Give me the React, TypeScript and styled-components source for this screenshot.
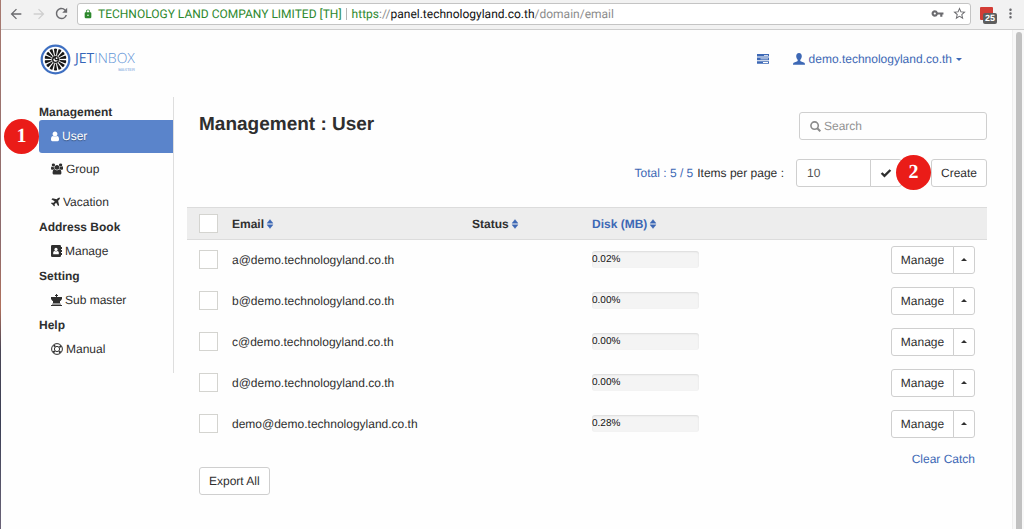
import React from "react";
import styled, { createGlobalStyle } from "styled-components";
import {
  MdArrowBack,
  MdArrowForward,
  MdRefresh,
  MdLock,
  MdVpnKey,
  MdStarBorder,
  MdMoreVert,
} from "react-icons/md";

const blue = "#3d68b5";
const ink = "#2f2f2f";
const line = "#cfcfcf";

const GlobalStyle = createGlobalStyle`
  *, *::before, *::after { box-sizing: border-box; }
  body {
    margin: 0;
    background: #fefefe;
    color: ${ink};
    font: 12px/16px "Liberation Sans", Arial, sans-serif;
    text-rendering: geometricPrecision;
  }
  button, input { font: inherit; color: inherit; text-rendering: inherit; }
  a { color: inherit; text-decoration: none; }
  svg { display: block; flex: none; }
`;

const Page = styled.div`
  display: flex;
  flex-direction: column;
  min-height: 100vh;
  border-left: 1px solid;
  border-image: linear-gradient(#a87a70, #8c6a6c 45%, #b0705c 58%, #4a4656 66%, #3b3f55 80%, #6b6478) 1;
`;

/* Browser chrome */

const BrowserBar = styled.div`
  display: flex;
  align-items: center;
  height: 30px;
  padding: 0 6px 2px 3px;
  background: #f2f2f2;
  border-bottom: 1px solid #cdcdcd;
`;

const BarButton = styled.button<{ $dim?: boolean }>`
  display: flex;
  align-items: center;
  justify-content: center;
  width: 23px;
  padding: 0;
  border: 0;
  background: none;
  color: ${(p) => (p.$dim ? "#cfcfcf" : "#6b6b6f")};
`;

const AddressBox = styled.div`
  display: flex;
  flex: 1;
  align-items: center;
  height: 22px;
  margin-left: 4px;
  padding: 0 3px 0 5px;
  background: #fff;
  border: 1px solid #c4c4c4;
  border-radius: 3px;
  font: 12px/16px Roboto, sans-serif;
  color: #8c8c8c;
`;

const Certificate = styled.span`
  margin-left: 5px;
  padding-right: 4px;
  border-right: 1px solid #b5b5b5;
  color: #2d882d;
  line-height: 12px;
`;

const Url = styled.span`
  flex: 1;
  margin-left: 5px;
`;

const Scheme = styled.span`
  color: #2d882d;
`;

const Host = styled.span`
  color: #111;
`;

const BoxIcons = styled.div`
  display: flex;
  align-items: center;
  gap: 8px;
  color: #6b6b6f;
`;

const Extension = styled.div`
  position: relative;
  width: 13px;
  height: 13px;
  margin: 0 10px 0 9px;
  border-radius: 1px;
  background: #d33c35;
`;

const ExtensionCount = styled.span`
  position: absolute;
  left: 3px;
  top: 6px;
  width: 14px;
  border-radius: 2px;
  background: #5d5d5d;
  color: #fff;
  font: bold 9px/11px "Liberation Sans", Arial, sans-serif;
  text-align: center;
`;

/* Page frame */

const Viewport = styled.div`
  display: flex;
  flex: 1;
`;

const Site = styled.div`
  flex: 1;
  padding: 0 25px 0 38px;
`;

const ScrollTrack = styled.div`
  display: flex;
  width: 12px;
  padding: 2px 2px 0 3px;
  background: #f8f8f8;
  border-left: 1px solid #eee;
`;

const ScrollThumb = styled.div`
  flex: 1;
  border-radius: 4px 4px 0 0;
  background: #c1c1c1;
`;

const Header = styled.header`
  display: flex;
  align-items: center;
  justify-content: space-between;
  height: 67px;
  padding: 0 25px 9px 1px;
  color: ${blue};
`;

const HeaderLinks = styled.nav`
  display: flex;
  align-items: center;
  gap: 24px;
`;

const Account = styled.a`
  display: flex;
  align-items: center;
  gap: 4px;
`;

const Columns = styled.div`
  display: flex;
  align-items: flex-start;
`;

/* Side menu */

const Sidebar = styled.nav`
  width: 135px;
  padding: 7px 0;
  border-right: 1px solid #dedede;
`;

const MenuHeading = styled.h2`
  margin: 0;
  font-size: 12px;
  line-height: 16px;
`;

const MenuItem = styled.a<{ $active?: boolean }>`
  position: relative;
  display: flex;
  align-items: center;
  gap: 3px;
  height: 33px;
  padding: 0 0 1px 12px;
  border-radius: 3px 0 0 3px;
  background: ${(p) => (p.$active ? "#5a84cb" : "none")};
  color: ${(p) => (p.$active ? "#fff" : ink)};
  text-shadow: ${(p) => (p.$active ? "0 1px 1px rgba(0, 0, 0, 0.35)" : "none")};
`;

const Marker = styled.span`
  position: absolute;
  right: 100%;
  top: 50%;
  width: 35px;
  height: 35px;
  margin-top: -18px;
  border-radius: 50%;
  background: #ea1c18;
  color: #fff;
  font: bold 20px/35px "Liberation Serif", serif;
  text-align: center;
  text-shadow: none;
`;

/* Content */

const Main = styled.main`
  flex: 1;
  padding: 15px 0 0 13px;
`;

const TitleRow = styled.div`
  display: flex;
  align-items: center;
  justify-content: space-between;
  padding-left: 12px;
`;

const Title = styled.h1`
  margin: 0;
  padding-bottom: 2px;
  font-size: 19px;
  line-height: 24px;
`;

const SearchBox = styled.label`
  display: flex;
  align-items: center;
  gap: 3px;
  width: 188px;
  height: 28px;
  padding: 0 10px;
  border: 1px solid ${line};
  border-radius: 3px;
  color: #8a8a8a;
`;

const SearchInput = styled.input`
  flex: 1;
  min-width: 0;
  padding: 0;
  border: 0;
  outline: 0;
  background: none;
  &::placeholder { color: #929292; opacity: 1; }
`;

const Toolbar = styled.div`
  display: flex;
  align-items: center;
  justify-content: flex-end;
  margin: 19px 0 20px;
`;

const Total = styled.span`
  margin-right: 4px;
  color: ${blue};
`;

const PageSizeLabel = styled.label`
  margin-right: 12px;
`;

const Group = styled.div`
  display: inline-flex;
`;

const PageSizeInput = styled.input`
  width: 75px;
  height: 28px;
  padding: 0 10px;
  border: 1px solid ${line};
  border-radius: 3px 0 0 3px;
  background: #fff;
  color: #555;
`;

const Button = styled.button<{ $join?: "left" | "right" }>`
  display: flex;
  align-items: center;
  justify-content: center;
  height: 28px;
  padding: 0 9px;
  border: 1px solid ${line};
  border-radius: ${(p) =>
    p.$join === "left" ? "3px 0 0 3px" : p.$join === "right" ? "0 3px 3px 0" : "3px"};
  margin-left: ${(p) => (p.$join === "right" ? "-1px" : "0")};
  background: #fff;
`;

const MarkedAction = styled.div`
  position: relative;
  margin-left: 29px;
`;

const UserTable = styled.table`
  width: 100%;
  table-layout: fixed;
  border-collapse: separate;
  border-spacing: 0;
  th, td { padding: 0; text-align: left; }
  td { height: 41px; padding-bottom: 2px; }
  th {
    height: 33px;
    background: #ededed;
    border: solid #dcdcdc;
    border-width: 1px 0;
  }
`;

const CheckCol = styled.col`
  width: 45px;
`;
const EmailCol = styled.col`
  width: 240px;
`;
const StatusCol = styled.col`
  width: 120px;
`;

const CheckBox = styled.input`
  display: block;
  appearance: none;
  width: 19px;
  height: 19px;
  margin: 0 0 0 12px;
  border: 1px solid #d4d4d0;
  background: #fff;
`;

const SortLink = styled.a<{ $active?: boolean }>`
  display: inline-flex;
  align-items: center;
  gap: 2px;
  color: ${(p) => (p.$active ? blue : ink)};
`;

const DiskBar = styled.div`
  width: 107px;
  height: 17px;
  border-radius: 3px;
  background: #f4f4f4;
  box-shadow: inset 0 1px 2px rgba(0, 0, 0, 0.1);
  color: #111;
  font-size: 10px;
  line-height: 17px;
`;

const RowActions = styled.div`
  display: flex;
  justify-content: flex-end;
  padding-right: 12px;
`;

const ManageButton = styled(Button)`
  width: 63px;
`;

const CaretButton = styled(Button)`
  width: 22px;
  padding: 0;
`;

const TableFooter = styled.footer`
  display: flex;
  align-items: flex-start;
  justify-content: space-between;
  padding: 6px 12px 12px;
`;

const ExportButton = styled(Button)`
  margin-top: 16px;
`;

const ClearLink = styled.a`
  color: ${blue};
`;

/* Icons */

type GlyphProps = { d: string; box: string; w: number; h: number };
const Glyph = ({ d, box, w, h }: GlyphProps) => (
  <svg width={w} height={h} viewBox={box} fill="currentColor" aria-hidden="true">
    <path fillRule="evenodd" d={d} />
  </svg>
);

const UserIcon = () => (
  <Glyph w={8} h={11} box="0 160 1280 1504" d="M1280 1399q0 109-62.5 187t-150.5 78h-854q-88 0-150.5-78t-62.5-187q0-85 8.5-160.5t31.5-152 58.5-131 94-89 134.5-34.5q131 128 313 128t313-128q76 0 134.5 34.5t94 89 58.5 131 31.5 152 8.5 160.5zm-256-887q0 159-112.5 271.5t-271.5 112.5-271.5-112.5-112.5-271.5 112.5-271.5 271.5-112.5 271.5 112.5 112.5 271.5z" />
);

const UsersIcon = () => (
  <svg width="12" height="12" viewBox="0 0 1920 1792" fill="currentColor" aria-hidden="true">
    <path d="M593 896q-162 5-265 128h-134q-82 0-138-40.5t-56-118.5q0-353 124-353 6 0 43.5 21t97.5 42.5 119 21.5q67 0 133-23-5 37-5 66 0 159 90 294zm1071 637q0 120-73 189.5t-194 69.5h-874q-121 0-194-69.5t-73-189.5q0-53 3.5-103.5t14-109 26.5-108.5 43-97.5 62-81 85.5-53.5 111.5-20q10 0 43 21.5t73 48 107 48 135 21.5 135-21.5 107-48 73-48 43-21.5q61 0 111.5 20t85.5 53.5 62 81 43 97.5 26.5 108.5 14 109 3.5 103.5zm-1024-1277q0 106-75 181t-181 75-181-75-75-181 75-181 181-75 181 75 75 181zm704 384q0 159-112.5 271.5t-271.5 112.5-271.5-112.5-112.5-271.5 112.5-271.5 271.5-112.5 271.5 112.5 112.5 271.5zm576 225q0 78-56 118.5t-138 40.5h-134q-103-123-265-128 90-135 90-294 0-29-5-66 66 23 133 23 59 0 119-21.5t97.5-42.5 43.5-21q124 0 124 353zm-128-609q0 106-75 181t-181 75-181-75-75-181 75-181 181-75 181 75 75 181z" />
  </svg>
);

const PlaneIcon = () => (
  <Glyph w={9} h={10} box="180 120 1430 1440" d="M1568 160q44 52 12 148t-108 172l-161 161 160 696q5 19-12 33l-128 96q-7 6-19 6-4 0-7-1-15-3-21-16l-279-508-259 259 53 194q5 17-8 31l-96 96q-9 9-23 9h-2q-15-2-24-13l-189-252-252-189q-11-7-13-23-1-13 9-25l96-97q9-9 23-9 6 0 8 1l194 53 259-259-508-279q-14-8-17-24-2-16 9-27l128-128q14-13 30-8l665 159 160-160q76-76 172-108t148 12z" />
);

const AddressIcon = () => (
  <svg width="11" height="12" viewBox="0 0 11 12" aria-hidden="true">
    <rect width="10" height="12" rx="1.3" fill="currentColor" />
    <path d="M10 2h1v2h-1zM10 5h1v2h-1zM10 8h1v2h-1z" fill="currentColor" />
    <circle cx="5" cy="4.4" r="1.6" fill="#fff" />
    <path d="M2.2 9.2V7.6q0-1.4 1.5-1.6Q5 6.9 6.3 6q1.5.2 1.5 1.6v1.6z" fill="#fff" />
  </svg>
);

const QueenIcon = () => (
  <Glyph w={11} h={12} box="0 0 11 12" d="M5 0h1v1h1v1H6v1h5v2L9.500 7H9v1H2V7h-.5L0 5V3h5V2H4V1h1zM2 8h7v1.200H2zM1 9.800h9v.7H1zM0 11h11v1H0z" />
);

const LifeRingIcon = () => (
  <svg width="12" height="12" viewBox="0 0 12 12" fill="none" stroke="currentColor" aria-hidden="true">
    <circle cx="6" cy="6" r="5.4" strokeWidth="1" />
    <circle cx="6" cy="6" r="2.6" strokeWidth="1" />
    <circle cx="6" cy="6" r="4.1" strokeWidth="2" strokeDasharray="1.800 4.640" strokeDashoffset="-2.320" />
  </svg>
);

const SearchIcon = () => (
  <svg width="11" height="11" viewBox="0 0 11 11" fill="none" stroke="currentColor" aria-hidden="true">
    <circle cx="4.6" cy="4.6" r="3.7" strokeWidth="1.6" />
    <path d="m7.3 7.3 3 3" strokeWidth="2" />
  </svg>
);

const CheckIcon = () => (
  <svg width="12" height="10" viewBox="0 0 12 10" fill="none" stroke="currentColor" aria-hidden="true">
    <path d="m1.6 5 2.9 2.9L10.4 2" strokeWidth="2.4" />
  </svg>
);

const SortIcon = () => (
  <svg width="8" height="10" viewBox="0 0 8 10" fill={blue} aria-hidden="true">
    <path d="M4 .6 7 4.200H1zM4 9.400 7 5.800H1z" stroke={blue} strokeWidth=".4" />
  </svg>
);

const TasksIcon = () => (
  <Glyph w={12} h={10} box="0 0 12 10" d="M0 0h12v2.6H0zM7 .9v.8h4V.9zM0 3.6h12v2.6H0zM3.5 4.5v.8H11v-.8zM0 7.2h12v2.6H0zM6 8.1v.8h5v-.8z" />
);

const PersonIcon = () => (
  <Glyph w={12} h={12} box="0 0 12 12" d="M6 0C7.9 0 8.8 1.3 8.8 3.2 8.8 4.8 8 6 7.3 6.7c-.2.8 0 1.5.8 1.8l2.7 1c.9.4 1.2 1 1.2 2.2H0c0-1.2.3-1.8 1.2-2.2l2.700-1c.8-.3 1-1 .8-1.8C4 6 3.2 4.8 3.2 3.2 3.2 1.300 4.100 0 6 0z" />
);

const Caret = ({ up }: { up?: boolean }) => (
  <Glyph w={6} h={3} box="0 0 6 3" d={up ? "M0 3h6L3 0z" : "M0 0h6L3 3z"} />
);

const LogoRow = styled.a`
  display: flex;
  align-items: center;
  gap: 4px;
`;

const LogoText = styled.span`
  display: flex;
  flex-direction: column;
  padding-top: 4px;
  color: #5f93d6;
`;

const LogoName = styled.span`
  font: 300 14px/17px "Open Sans", "Noto Sans", sans-serif;
`;

const LogoStrong = styled.span`
  font-weight: 400;
  color: #3565b8;
`;

const LogoTag = styled.span`
  align-self: flex-end;
  font: 4px/5px "Liberation Sans", Arial, sans-serif;
`;

const blades = Array.from({ length: 14 }, (_, i) => (i * 360) / 14);

const Logo = () => (
  <LogoRow href="#" aria-label="Jetinbox Master">
    <svg width="31" height="31" viewBox="0 0 31 31" aria-hidden="true">
      <circle cx="15.5" cy="15.5" r="13.8" fill="#fff" stroke="#3e6fc1" strokeWidth="2.2" />
      {blades.map((a) => (
        <path key={a} d="M15 11.500 13.900 5Q15.500 4 17.100 5L16 11.500z" fill="#161616" transform={`rotate(${a} 15.5 15.5)`} />
      ))}
      <circle cx="15.5" cy="15.5" r="4" fill="#161616" stroke="#fff" strokeWidth=".5" />
      <path d="M13.300 15.200q0 2.500 2.300 2.500 2 0 2.200-2-1.500 1-2.600.3-.8-.5-.5-1.600-1.300.100-1.400.8z" fill="#fff" />
      <circle cx="16.6" cy="14.2" r=".9" fill="#fff" />
    </svg>
    <LogoText>
      <LogoName><LogoStrong>JET</LogoStrong>INBOX</LogoName>
      <LogoTag>MASTER</LogoTag>
    </LogoText>
  </LogoRow>
);

const users = [
  { email: "a@demo.technologyland.co.th", disk: "0.02%" },
  { email: "b@demo.technologyland.co.th", disk: "0.00%" },
  { email: "c@demo.technologyland.co.th", disk: "0.00%" },
  { email: "d@demo.technologyland.co.th", disk: "0.00%" },
  { email: "demo@demo.technologyland.co.th", disk: "0.28%" },
];

export default function App() {
  return (
    <>
      <GlobalStyle />
      <Page>
        <BrowserBar>
          <BarButton aria-label="Back"><MdArrowBack size={16} /></BarButton>
          <BarButton aria-label="Forward" $dim><MdArrowForward size={16} /></BarButton>
          <BarButton aria-label="Reload"><MdRefresh size={17} /></BarButton>
          <AddressBox>
            <MdLock size={10} color="#2d882d" />
            <Certificate>TECHNOLOGY LAND COMPANY LIMITED [TH]</Certificate>
            <Url>
              <Scheme>https</Scheme>://<Host>panel.technologyland.co.th</Host>/domain/email
            </Url>
            <BoxIcons>
              <MdVpnKey size={13} />
              <MdStarBorder size={15} />
            </BoxIcons>
          </AddressBox>
          <Extension><ExtensionCount>25</ExtensionCount></Extension>
          <MdMoreVert size={15} color="#6b6b6f" />
        </BrowserBar>
        <Viewport>
          <Site>
            <Header>
              <Logo />
              <HeaderLinks>
                <a href="#" aria-label="Tasks"><TasksIcon /></a>
                <Account href="#">
                  <PersonIcon />
                  demo.technologyland.co.th
                  <Caret />
                </Account>
              </HeaderLinks>
            </Header>
            <Columns>
              <Sidebar>
                <MenuHeading>Management</MenuHeading>
                <MenuItem href="#" $active><Marker>1</Marker><UserIcon />User</MenuItem>
                <MenuItem href="#"><UsersIcon />Group</MenuItem>
                <MenuItem href="#"><PlaneIcon />Vacation</MenuItem>
                <MenuHeading>Address Book</MenuHeading>
                <MenuItem href="#"><AddressIcon />Manage</MenuItem>
                <MenuHeading>Setting</MenuHeading>
                <MenuItem href="#"><QueenIcon />Sub master</MenuItem>
                <MenuHeading>Help</MenuHeading>
                <MenuItem href="#"><LifeRingIcon />Manual</MenuItem>
              </Sidebar>
              <Main>
                <TitleRow>
                  <Title>Management : User</Title>
                  <SearchBox>
                    <SearchIcon />
                    <SearchInput type="text" placeholder="Search" aria-label="Search" />
                  </SearchBox>
                </TitleRow>
                <Toolbar>
                  <Total>Total : 5 / 5</Total>
                  <PageSizeLabel htmlFor="page-size">Items per page :</PageSizeLabel>
                  <Group>
                    <PageSizeInput id="page-size" type="text" defaultValue="10" />
                    <Button $join="right" aria-label="Apply"><CheckIcon /></Button>
                  </Group>
                  <MarkedAction>
                    <Marker>2</Marker>
                    <Button>Create</Button>
                  </MarkedAction>
                </Toolbar>
                <UserTable>
                  <colgroup>
                    <CheckCol /><EmailCol /><StatusCol /><col /><col />
                  </colgroup>
                  <thead>
                    <tr>
                      <th><CheckBox type="checkbox" aria-label="Select all" /></th>
                      <th><SortLink href="#">Email<SortIcon /></SortLink></th>
                      <th><SortLink href="#">Status<SortIcon /></SortLink></th>
                      <th><SortLink href="#" $active>Disk (MB)<SortIcon /></SortLink></th>
                      <th />
                    </tr>
                  </thead>
                  <tbody>
                    {users.map((u) => (
                      <tr key={u.email}>
                        <td><CheckBox type="checkbox" aria-label={u.email} /></td>
                        <td>{u.email}</td>
                        <td />
                        <td><DiskBar>{u.disk}</DiskBar></td>
                        <td>
                          <RowActions>
                            <ManageButton $join="left">Manage</ManageButton>
                            <CaretButton $join="right" aria-label="More actions"><Caret up /></CaretButton>
                          </RowActions>
                        </td>
                      </tr>
                    ))}
                  </tbody>
                </UserTable>
                <TableFooter>
                  <ExportButton>Export All</ExportButton>
                  <ClearLink href="#">Clear Catch</ClearLink>
                </TableFooter>
              </Main>
            </Columns>
          </Site>
          <ScrollTrack><ScrollThumb /></ScrollTrack>
        </Viewport>
      </Page>
    </>
  );
}
